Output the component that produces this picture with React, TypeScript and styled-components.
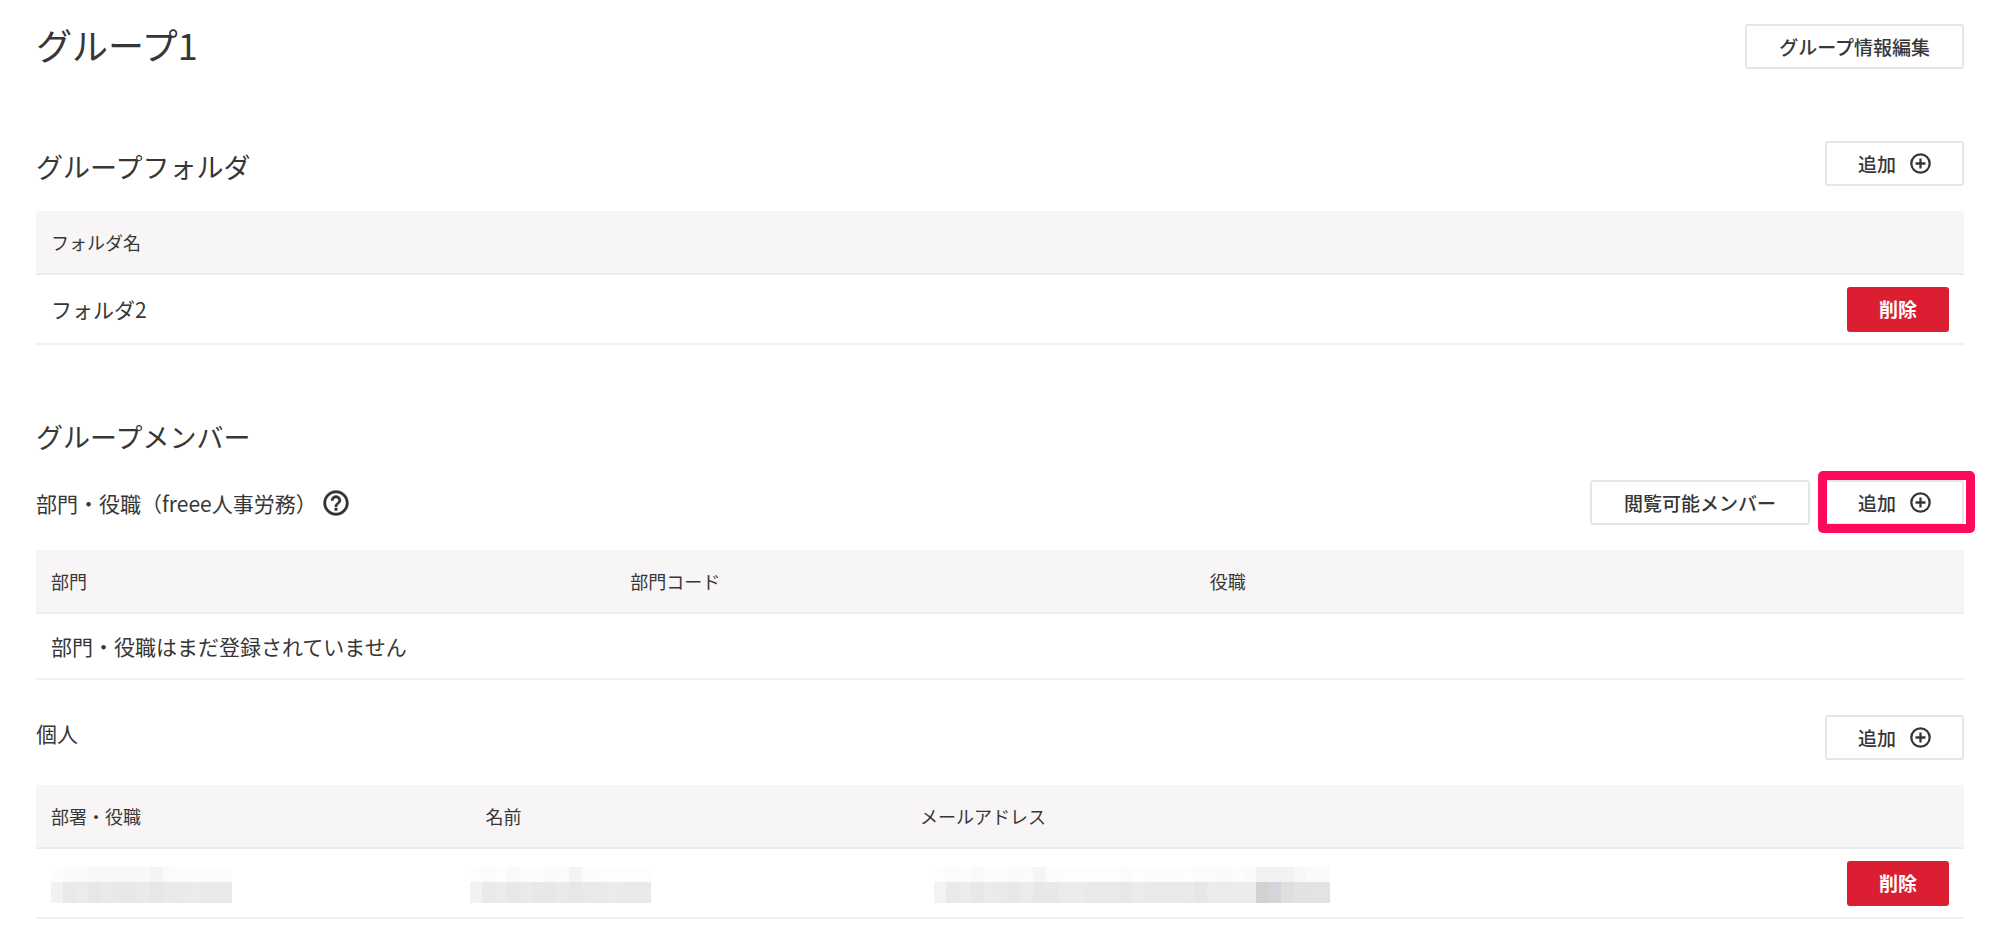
import React from "react";
import styled, { createGlobalStyle, css } from "styled-components";

const GlobalStyle = createGlobalStyle`
  *, *::before, *::after { box-sizing: border-box; }
  body {
    margin: 0;
    background: #fff;
    color: #373737;
    font-family: "Noto Sans CJK JP", "Noto Sans", sans-serif;
    font-size: 21px;
    line-height: 36px;
  }
`;

const Page = styled.main`
  padding: 24px 35px 32px 36px;
`;

const PageHeader = styled.header`
  display: flex;
  align-items: flex-start;
  justify-content: space-between;
`;

const PageTitle = styled.h1`
  margin: 0;
  font-size: 36px;
  font-weight: 400;
  line-height: 40px;
`;

const Section = styled.section`
  margin-top: 72px;
`;

const SectionTitle = styled.h2`
  margin: 0;
  font-size: 27px;
  font-weight: 400;
  line-height: 38px;
`;

const Bar = styled.div<{ $align?: "flex-start" | "center" | "flex-end" }>`
  display: flex;
  align-items: ${(p) => p.$align ?? "center"};
  justify-content: space-between;
  margin-bottom: 25px;
`;

const SubTitle = styled.h3`
  display: flex;
  align-items: center;
  gap: 4px;
  margin: 0;
  font-size: 21px;
  font-weight: 400;
`;

const Actions = styled.div`
  display: flex;
  gap: 15px;
`;

const buttonPadding = { plain: 32, icon: 31, danger: 30 };

const Button = styled.button<{ $kind?: keyof typeof buttonPadding }>`
  display: inline-flex;
  align-items: center;
  justify-content: center;
  gap: 14px;
  height: 45px;
  padding: 0 ${(p) => buttonPadding[p.$kind ?? "plain"]}px;
  border: 2px solid #e6e6e6;
  border-radius: 3px;
  background: #fff;
  color: #373737;
  font-family: inherit;
  font-size: 19px;
  font-weight: 500;
  line-height: 24px;
  white-space: nowrap;
  cursor: pointer;
  ${(p) =>
    p.$kind === "danger" &&
    css`
      border-color: #dc1e32;
      background: #dc1e32;
      color: #fff;
      font-weight: 700;
    `}
`;

const HelpButton = styled.button`
  display: inline-flex;
  padding: 0;
  border: 0;
  background: none;
  color: #323232;
  cursor: pointer;
`;

const Highlight = styled.div`
  position: relative;
  display: flex;

  &::after {
    content: "";
    position: absolute;
    inset: -9px -11px -8px -7px;
    border: 9px solid #ff0a5a;
    border-radius: 5px;
    pointer-events: none;
  }
`;

const Table = styled.table`
  width: 100%;
  table-layout: fixed;
  border-collapse: collapse;
`;

const ActionCol = styled.col`
  width: 190px;
`;

const HeadCell = styled.th`
  height: 63px;
  padding: 0 15px;
  border-bottom: 2px solid #e9eef1;
  background: #f7f5f5;
  font-size: 18px;
  font-weight: 400;
  text-align: left;
`;

const Cell = styled.td<{ $right?: boolean; $short?: boolean }>`
  height: ${(p) => (p.$short ? 66 : 70)}px;
  padding: 0 15px;
  border-bottom: 2px solid #eef1f3;
  text-align: ${(p) => (p.$right ? "right" : "left")};
  vertical-align: middle;

  & > * {
    vertical-align: middle;
  }
`;

const Pixels = styled.svg<{ $shift: number }>`
  display: block;
  margin-top: 3px;
  margin-left: ${(p) => p.$shift}px;
`;

const AddIcon = () => (
  <svg width="21" height="21" viewBox="0 0 21 21" fill="none" stroke="currentColor" strokeWidth="2.3" aria-hidden="true">
    <circle cx="10.5" cy="10.5" r="9.2" />
    <path d="M10.5 5.500v10M5.500 10.500h10" />
  </svg>
);

const HelpIcon = () => (
  <svg width="30" height="30" viewBox="0 0 24 24" fill="currentColor" stroke="currentColor" strokeWidth="0.3" aria-hidden="true">
    <path d="M11 18h2v-2h-2v2zm1-16C6.48 2 2 6.48 2 12s4.480 10 10 10 10-4.480 10-10S17.520 2 12 2zm0 18c-4.410 0-8-3.590-8-8s3.590-8 8-8 8 3.590 8 8-3.590 8-8 8zm0-14c-2.210 0-4 1.790-4 4h2c0-1.100.9-2 2-2s2 .9 2 2c0 2-3 1.750-3 5h2c0-2.250 3-2.500 3-5 0-2.210-1.790-4-4-4z" />
  </svg>
);

const shortTop = ["#fdfdfd", "#fafafa", "#fafafa", "#f8f8f8", "#f8f8f8", "#f8f8f8", "#f7f7f7", "#f9f9f9", "#f4f4f4", "#fbfbfb", "#fcfcfc", "#fcfcfc", "#fcfcfc", "#fcfcfc", "#fcfcfc"];
const shortBottom = ["#f2f2f2", "#e9e9e9", "#ebebeb", "#e7e7e7", "#eaeaea", "#e8e8e8", "#e8e8e8", "#eaeaea", "#e7e7e7", "#e9e9e9", "#eaeaea", "#ebebeb", "#eaeaea", "#eaeaea", "#eaeaea"];
const nameTop = ["#fdfdfd", "#fbfbfb", "#fdfdfd", "#f9f9f9", "#fcfcfc", "#fcfcfc", "#fafafa", "#fbfbfb", "#f4f4f4", "#fcfcfc", "#fdfdfd", "#fdfdfd", "#fdfdfd", "#fdfdfd", "#fdfdfd"];
const mailTop = ["#fdfdfd", "#fbfbfb", "#fcfcfc", "#f9f9f9", "#fcfcfc", "#fcfcfc", "#fafafa", "#fbfbfb", "#f5f5f5", "#fcfcfc", "#fdfdfd", "#fdfdfd", "#fdfdfd", "#fdfdfd", "#fdfdfd", "#fbfbfb", "#fdfdfd", "#fcfcfc", "#fcfcfc", "#fcfcfc", "#fdfdfd", "#fbfbfb", "#fbfbfb", "#fafafa", "#fcfcfc", "#f8fafb", "#f2f3f1", "#f0f3f2", "#f2f2f0", "#f7f7f7", "#fafafa", "#fafafa"];
const mailBottom = ["#f3f3f3", "#e9e9e9", "#ececec", "#e8e8e8", "#ebebeb", "#eaeaea", "#e8e8e8", "#ebebeb", "#e7e7e7", "#e8e8e8", "#ebebeb", "#ececec", "#eaeaea", "#eaeaea", "#eaeaea", "#e8e8e8", "#ececec", "#e9e9e9", "#e9e9e9", "#e9e9e9", "#eaeaea", "#e7e7e7", "#ebebeb", "#ebebeb", "#ebeded", "#eaecee", "#d3d2d0", "#d3d5da", "#e0dfdd", "#e3e2e0", "#e1e3e6", "#e4e3e1"];

const Redacted = ({ top, bottom, width, shift = 0 }: { top: string[]; bottom: string[]; width: number; shift?: number }) => (
  <Pixels $shift={shift} width={width} height="36" viewBox={`0 0 ${width} 36`} shapeRendering="crispEdges" aria-hidden="true">
    {top.map((fill, i) => (
      <rect key={`t${i}`} x={i * 12.4} y="0" width="12.4" height="15" fill={fill} />
    ))}
    {bottom.map((fill, i) => (
      <rect key={`b${i}`} x={i * 12.4} y="15" width="12.4" height="21" fill={fill} />
    ))}
  </Pixels>
);

const AddButton = () => (
  <Button type="button" $kind="icon">
    追加
    <AddIcon />
  </Button>
);

const MemberSection = styled(Section)`
  margin-top: 73px;
`;

const MemberBar = styled(Bar)`
  margin-top: 24px;
`;

const PersonBar = styled(Bar)`
  margin-top: 35px;
`;

export default function App() {
  return (
    <>
      <GlobalStyle />
      <Page>
        <PageHeader>
          <PageTitle>グループ1</PageTitle>
          <Button type="button">グループ情報編集</Button>
        </PageHeader>

        <Section>
          <Bar $align="flex-end">
            <SectionTitle>グループフォルダ</SectionTitle>
            <AddButton />
          </Bar>
          <Table>
            <colgroup>
              <col />
              <ActionCol />
            </colgroup>
            <thead>
              <tr>
                <HeadCell scope="col">フォルダ名</HeadCell>
                <HeadCell as="td" />
              </tr>
            </thead>
            <tbody>
              <tr>
                <Cell>フォルダ2</Cell>
                <Cell $right>
                  <Button type="button" $kind="danger">削除</Button>
                </Cell>
              </tr>
            </tbody>
          </Table>
        </Section>

        <MemberSection>
          <SectionTitle>グループメンバー</SectionTitle>
          <MemberBar>
            <SubTitle>
              部門・役職（freee人事労務）
              <HelpButton type="button" aria-label="ヘルプ">
                <HelpIcon />
              </HelpButton>
            </SubTitle>
            <Actions>
              <Button type="button">閲覧可能メンバー</Button>
              <Highlight>
                <AddButton />
              </Highlight>
            </Actions>
          </MemberBar>
          <Table>
            <colgroup>
              <col />
              <col />
              <col />
              <ActionCol />
            </colgroup>
            <thead>
              <tr>
                <HeadCell scope="col">部門</HeadCell>
                <HeadCell scope="col">部門コード</HeadCell>
                <HeadCell scope="col">役職</HeadCell>
                <HeadCell as="td" />
              </tr>
            </thead>
            <tbody>
              <tr>
                <Cell colSpan={4} $short>部門・役職はまだ登録されていません</Cell>
              </tr>
            </tbody>
          </Table>

          <PersonBar $align="flex-start">
            <SubTitle>個人</SubTitle>
            <AddButton />
          </PersonBar>
          <Table>
            <colgroup>
              <col />
              <col />
              <col />
              <col />
              <ActionCol />
            </colgroup>
            <thead>
              <tr>
                <HeadCell scope="col">部署・役職</HeadCell>
                <HeadCell scope="col">名前</HeadCell>
                <HeadCell scope="col">メールアドレス</HeadCell>
                <HeadCell as="td" />
                <HeadCell as="td" />
              </tr>
            </thead>
            <tbody>
              <tr>
                <Cell>
                  <Redacted top={shortTop} bottom={shortBottom} width={181} />
                </Cell>
                <Cell>
                  <Redacted top={nameTop} bottom={shortBottom} width={181} shift={-16} />
                </Cell>
                <Cell>
                  <Redacted top={mailTop} bottom={mailBottom} width={396} shift={14} />
                </Cell>
                <Cell />
                <Cell $right>
                  <Button type="button" $kind="danger">削除</Button>
                </Cell>
              </tr>
            </tbody>
          </Table>
        </MemberSection>
      </Page>
    </>
  );
}
